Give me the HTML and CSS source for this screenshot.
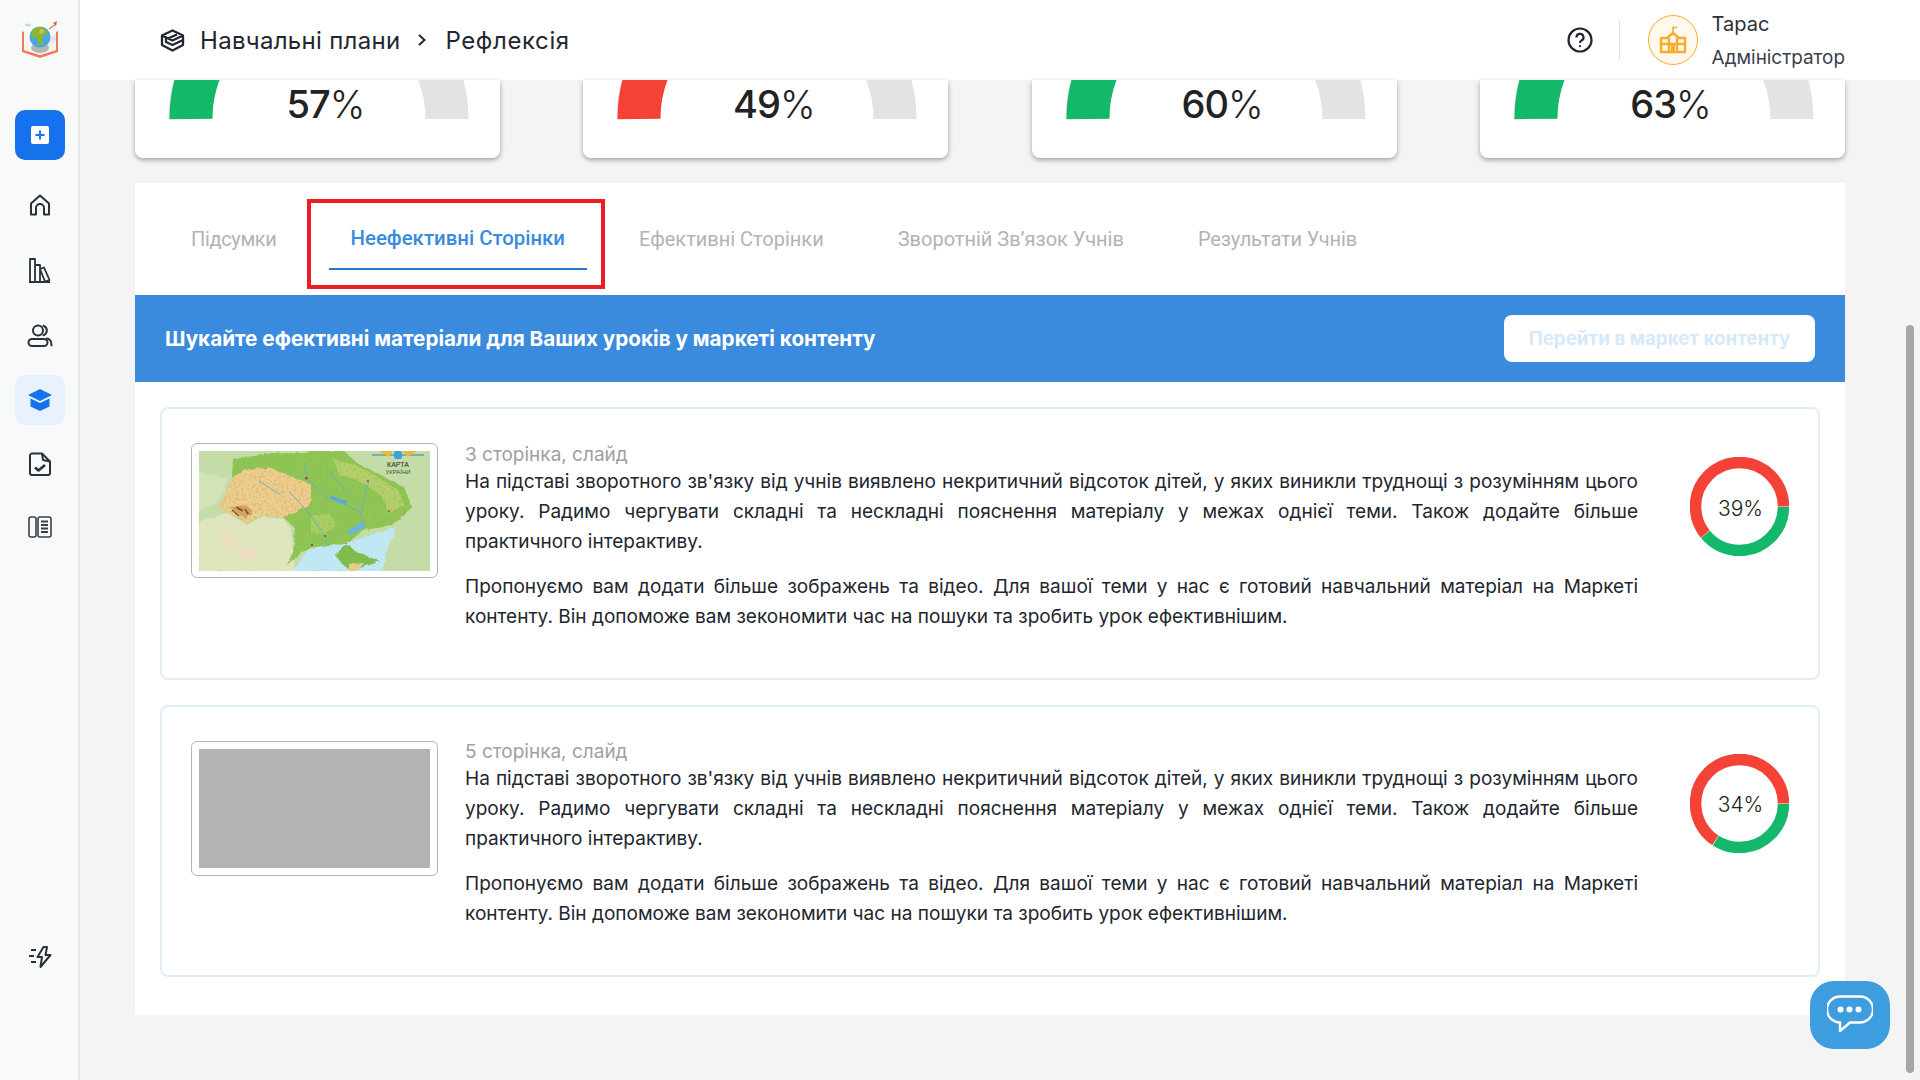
FILE: index.html
```html
<!DOCTYPE html>
<html lang="uk">
<head>
<meta charset="utf-8">
<title>Рефлексія</title>
<link rel="stylesheet" href="styles.css">
</head>
<body>
<aside class="sidebar">
  <div class="logo">
    <svg width="40" height="40" viewBox="0 0 40 40">
      <path d="M2 12V33L20 39L38 33V12L36 13V31L20 36L4 31V13Z" fill="#ee7b55"/>
      <path d="M4 14L20 22L36 14V31L20 36L4 31Z" fill="#f5f5f6"/>
      <path d="M20 22L36 14V22L20 36Z" fill="#ebebed"/>
      <ellipse cx="20" cy="29" rx="9" ry="5" fill="#b5b5b8"/>
      <circle cx="20" cy="18" r="10.5" fill="#4ea6dc"/>
      <path d="M12 11Q19 5 26 10L27 15L22 18L23 25L19 27L17 20L11 17Z" fill="#84b936"/>
      <path d="M20 10L24 11L23 15L19 14Z" fill="#e9b743"/>
      <path d="M29 10L36 5" stroke="#ee7b55" stroke-width="1.4"/>
      <path d="M33 4L37 2L36 7Z" fill="#e0604a"/>
      <ellipse cx="8" cy="6" rx="3" ry="1.6" fill="#bfdcf2"/>
      <ellipse cx="33" cy="20" rx="2.5" ry="1.3" fill="#d4e6f4"/>
    </svg>
  </div>
  <button class="add-btn">
    <svg width="18" height="18" viewBox="0 0 18 18"><rect width="18" height="18" rx="2" fill="#fff"/><path d="M9 4.5v9M4.5 9h9" stroke="#1672ec" stroke-width="2"/></svg>
  </button>
  <nav class="nav-top">
    <span class="nav-item">
      <svg width="24" height="24" viewBox="0 0 24 24" fill="none" stroke="#2b303a" stroke-width="2" stroke-linejoin="round"><path d="M3 21.5V10.5L12 2.5L21 10.5V21.5H16V15A4 4 0 0 0 8 15V21.5Z"/></svg>
    </span>
    <span class="nav-item">
      <svg width="24" height="26" viewBox="0 0 24 26" fill="none" stroke="#2b303a" stroke-width="1.8" stroke-linejoin="round"><path d="M2 24V2H7V24M7 24V8H12V24M12 12L16 10.5L21.5 23L17 24.5ZM1 25H22"/></svg>
    </span>
    <span class="nav-item">
      <svg width="26" height="24" viewBox="0 0 26 24" fill="none" stroke="#2b303a" stroke-width="2" stroke-linecap="round"><circle cx="11" cy="6.5" r="5"/><rect x="1.5" y="15" width="19" height="7" rx="3.5"/><path d="M16.5 1.8A5 5 0 0 1 16.5 11.2M20 14.5C23 15 24.5 18 24.5 21.5"/></svg>
    </span>
    <span class="nav-item nav-active">
      <svg width="26" height="24" viewBox="0 0 26 24"><path d="M13 1L25 7L13 13L1 7Z" fill="#1672ec"/><path d="M3.5 10.5L13 15L22.5 10.5V18.5L13 23L3.5 18.5Z" fill="#1672ec"/></svg>
    </span>
    <span class="nav-item">
      <svg width="22" height="24" viewBox="0 0 22 24" fill="none" stroke="#2b303a" stroke-width="2" stroke-linejoin="round"><path d="M13 1.5H3A2 2 0 0 0 1 3.5V21A2 2 0 0 0 3 23H19A2 2 0 0 0 21 21V9.5Z"/><path d="M13 1.5L14 8L21 9.5" /><path d="M6 15.5L9.5 18.5L16 13" stroke-width="2.6"/></svg>
    </span>
    <span class="nav-item">
      <svg width="24" height="24" viewBox="0 0 24 24" fill="none" stroke="#3b404a" stroke-width="1.6"><rect x="1" y="2" width="7" height="20" rx="2"/><rect x="10" y="2" width="13" height="20" rx="2"/><path d="M13 6.5H20M13 10H20M13 13.5H20M13 17H20" stroke-width="2.2"/></svg>
    </span>
  </nav>
  <span class="nav-item nav-bottom">
    <svg width="24" height="22" viewBox="0 0 24 22" fill="none" stroke="#2b303a" stroke-width="2" stroke-linejoin="round"><path d="M15.5 1L9.5 11H14L12.5 21L22.5 9H17.5L19 1Z"/><path d="M3 4H8M1 10H6M3 16H8"/></svg>
  </span>
</aside>

<div class="page">
  <header class="topbar">
    <div class="crumbs">
      <svg class="crumb-icon" width="25" height="23" viewBox="0 0 25 23" fill="none" stroke="#22262e" stroke-width="2.3" stroke-linejoin="round"><path d="M8 9.5L17 5.5M12.5 1.5L23 6.5L12.5 11.5L2 6.5Z"/><path d="M6 9V13L12.5 16L23 11V7"/><path d="M2 7V16L12.5 21.5L23 16V11"/></svg>
      <span>Навчальні плани</span>
      <svg class="crumb-sep" width="10" height="14" viewBox="0 0 10 14" fill="none" stroke="#22262e" stroke-width="2"><path d="M2 2L7.5 7L2 12"/></svg>
      <span class="crumb-last">Рефлексія</span>
    </div>
    <div class="account">
      <svg class="help" width="26" height="26" viewBox="0 0 26 26" fill="none" stroke="#22262e" stroke-width="2.2"><circle cx="13" cy="13" r="11.5"/><path d="M9.5 10.5A3.5 3.5 0 1 1 14.5 13.5C13.3 14.1 13 14.8 13 16"/><circle cx="13" cy="19.2" r="1.1" fill="#22262e" stroke="none"/></svg>
      <span class="vline"></span>
      <span class="avatar">
        <svg width="28" height="28" viewBox="0 0 28 28" fill="none" stroke="#fbab2c" stroke-width="2.4"><path d="M14 9V1.5H18" stroke-width="1.6"/><path d="M14 7L20 12H26V26H2V12H8Z" stroke-linejoin="round"/><path d="M2 18H26M10 12V26M18 12V26" /><rect x="12" y="19" width="4" height="7" fill="#fbab2c" stroke="none"/></svg>
      </span>
      <div class="who">
        <div class="who-name">Тарас</div>
        <div class="who-role">Адміністратор</div>
      </div>
    </div>
  </header>

  <main class="content">
    <section class="stats">
      <div class="stat">
        <svg class="gauge" width="365" height="78" viewBox="0 0 365 78"><g fill="none" stroke-width="43"><path d="M55 39A128.5 128.5 0 0 1 312 39" stroke="#e3e3e3"/><path d="M56 39A128.5 128.5 0 0 1 93 -52" stroke="#14b86b"/></g></svg>
        <div class="stat-num">57<span class="pct">%</span></div>
      </div>
      <div class="stat">
        <svg class="gauge" width="365" height="78" viewBox="0 0 365 78"><g fill="none" stroke-width="43"><path d="M55 39A128.5 128.5 0 0 1 312 39" stroke="#e3e3e3"/><path d="M56 39A128.5 128.5 0 0 1 93 -52" stroke="#f44336"/></g></svg>
        <div class="stat-num">49<span class="pct">%</span></div>
      </div>
      <div class="stat">
        <svg class="gauge" width="365" height="78" viewBox="0 0 365 78"><g fill="none" stroke-width="43"><path d="M55 39A128.5 128.5 0 0 1 312 39" stroke="#e3e3e3"/><path d="M56 39A128.5 128.5 0 0 1 93 -52" stroke="#14b86b"/></g></svg>
        <div class="stat-num">60<span class="pct">%</span></div>
      </div>
      <div class="stat">
        <svg class="gauge" width="365" height="78" viewBox="0 0 365 78"><g fill="none" stroke-width="43"><path d="M55 39A128.5 128.5 0 0 1 312 39" stroke="#e3e3e3"/><path d="M56 39A128.5 128.5 0 0 1 93 -52" stroke="#14b86b"/></g></svg>
        <div class="stat-num">63<span class="pct">%</span></div>
      </div>
    </section>

    <section class="panel">
      <div class="tabs">
        <span class="tab tab-first">Підсумки</span>
        <span class="tab tab-active">Неефективні Сторінки</span>
        <span class="tab">Ефективні Сторінки</span>
        <span class="tab">Зворотній Зв’язок Учнів</span>
        <span class="tab tab-last">Результати Учнів</span>
      </div>
      <div class="banner">
        <span class="banner-text">Шукайте ефективні матеріали для Ваших уроків у маркеті контенту</span>
        <button class="banner-btn">Перейти в маркет контенту</button>
      </div>
      <div class="items">
        <article class="item">
          <div class="thumb">
            <svg width="231" height="120" viewBox="0 0 231 120">
              <defs>
                <filter id="rough" x="0" y="0" width="100%" height="100%"><feTurbulence type="fractalNoise" baseFrequency="0.16" numOctaves="3" seed="4"/><feDisplacementMap in="SourceGraphic" scale="4"/></filter>
                <filter id="speck" x="0" y="0" width="100%" height="100%"><feTurbulence type="fractalNoise" baseFrequency="0.4" numOctaves="2" seed="9"/><feColorMatrix values="0 0 0 0 0.3  0 0 0 0 0.4  0 0 0 0 0.1  0 0 0 1.2 -0.55"/></filter>
                <clipPath id="land"><path d="M34 9L68 2L110 2L112 0L145 0L158 12L178 22L205 36L213 56L201 69L184 76L164 79L148 93L128 94L112 97L102 102L88 114L96 97L95 76L84 66L64 64L48 72L28 61L18 56L25 49L33 26Z"/></clipPath>
              </defs>
              <rect width="231" height="120" fill="#c4dca8"/>
              <g filter="url(#rough)">
                <path d="M0 20L30 28L20 50L0 60Z" fill="#d3e3b8"/>
                <path d="M0 70L28 62L48 74L64 66L84 68L92 78L96 120H0Z" fill="#dfe6bd"/>
                <path d="M20 85L32 80L40 92L28 100ZM38 98L56 96L60 108L42 110Z" fill="#ecdcc0"/>
                <path d="M95 120L110 97L147 92L198 76L186 105L184 120Z" fill="#bfe7f4"/>
                <path d="M34 9L68 2L110 2L112 0L145 0L158 12L178 22L205 36L213 56L201 69L184 76L164 79L148 93L128 94L112 97L102 102L88 114L96 97L95 76L84 66L64 64L48 72L28 61L18 56L25 49L33 26Z" fill="#8ec653"/>
                <path d="M140 98L150 94L157 101L181 110L168 115L152 120L143 113L136 104Z" fill="#7dbd4c"/>
                <path d="M150 113L165 112L160 119L150 120Z" fill="#e8c98a"/>
                <path d="M28 61L18 56L25 49L33 26L50 18L72 17L94 26L112 33L112 54L96 62L84 66L64 64L48 72Z" fill="#f2cc8d"/>
                <path d="M30 56L46 54L54 60L48 68L38 62Z" fill="#d6a26a"/>
                <path d="M134 8L156 14L176 24L200 40L205 55L190 62L182 44L160 30L140 24Z" fill="#b4d06a"/>
                <path d="M112 66L130 62L138 74L124 84L112 82Z" fill="#a9cf63"/>
                <path d="M38 57L44 60M46 58L50 64M34 60L40 65" stroke="#8a4a2a" stroke-width="1.6"/>
              </g>
              <g clip-path="url(#land)"><rect width="231" height="120" filter="url(#speck)"/></g>
              <g fill="none" stroke="#5fb0c9" stroke-width=".9">
                <path d="M106 12L108 28L128 46L160 60L165 72L150 82"/>
                <path d="M90 40L110 62L125 84M125 84L128 93"/>
                <path d="M60 30L82 44M130 20L150 44M170 30L162 60"/>
              </g>
              <path d="M130 44L148 50L146 54L132 48Z" fill="#5aa9d8"/>
              <path d="M148 80L164 70L166 76L152 84Z" fill="#6cb4dc"/>
              <g fill="#b4452f"><rect x="106" y="26" width="2.4" height="2.4"/><circle cx="126" cy="85" r="1"/><rect x="112" y="93" width="2" height="2"/><circle cx="169" cy="30" r="1"/><circle cx="190" cy="60" r="1"/></g>
              <path d="M173 4H225" stroke="#2a5db0" stroke-width=".8"/>
              <path d="M180 0L194 0L190 6ZM218 0L204 0L208 6Z" fill="#e9b93c"/>
              <rect x="195" y="0" width="8" height="8" rx="2" fill="#3fa0d8"/>
              <text class="map-title" x="199" y="16">КАРТА</text>
              <text class="map-sub" x="199" y="23">УКРАЇНИ</text>
            </svg>
          </div>
          <div class="copy">
            <div class="meta">3 сторінка, слайд</div>
            <p class="para">На підставі зворотного зв'язку від учнів виявлено некритичний відсоток дітей, у яких виникли труднощі з розумінням цього уроку. Радимо чергувати складні та нескладні пояснення матеріалу у межах однієї теми. Також додайте більше практичного інтерактиву.</p>
            <p class="para">Пропонуємо вам додати більше зображень та відео. Для вашої теми у нас є готовий навчальний матеріал на Маркеті контенту. Він допоможе вам зекономити час на пошуки та зробить урок ефективнішим.</p>
          </div>
          <div class="ring">
            <svg width="99" height="99" viewBox="0 0 99 99" fill="none" stroke-width="11.5"><circle cx="49.5" cy="49.5" r="44" stroke="#14b86b" stroke-dasharray="107.3 276.5" stroke-dashoffset="-0.5"/><circle cx="49.5" cy="49.5" r="44" stroke="#f44336" stroke-dasharray="167.7 276.5" stroke-dashoffset="-108.3"/></svg>
            <span class="ring-num">39%</span>
          </div>
        </article>
        <article class="item">
          <div class="thumb"><div class="thumb-empty"></div></div>
          <div class="copy">
            <div class="meta">5 сторінка, слайд</div>
            <p class="para">На підставі зворотного зв'язку від учнів виявлено некритичний відсоток дітей, у яких виникли труднощі з розумінням цього уроку. Радимо чергувати складні та нескладні пояснення матеріалу у межах однієї теми. Також додайте більше практичного інтерактиву.</p>
            <p class="para">Пропонуємо вам додати більше зображень та відео. Для вашої теми у нас є готовий навчальний матеріал на Маркеті контенту. Він допоможе вам зекономити час на пошуки та зробить урок ефективнішим.</p>
          </div>
          <div class="ring ring-second">
            <svg width="99" height="99" viewBox="0 0 99 99" fill="none" stroke-width="11.5"><circle cx="49.5" cy="49.5" r="44" stroke="#14b86b" stroke-dasharray="93.5 276.5" stroke-dashoffset="-0.5"/><circle cx="49.5" cy="49.5" r="44" stroke="#f44336" stroke-dasharray="181.5 276.5" stroke-dashoffset="-94.5"/></svg>
            <span class="ring-num">34%</span>
          </div>
        </article>
      </div>
    </section>
  </main>
  <span class="scroll-thumb"></span>
  <button class="chat">
    <svg width="46" height="40" viewBox="0 0 46 40" fill="none" stroke="#fff" stroke-width="2.4" stroke-linejoin="round"><path d="M13 1.5H33A11.5 11.5 0 0 1 33 27.5H23L13 36V27.5A13 13 0 0 1 13 1.5Z"/><g fill="#fff" stroke="none"><circle cx="13.5" cy="14.5" r="3"/><circle cx="22.5" cy="14.5" r="3"/><circle cx="31.5" cy="14.5" r="3"/></g></svg>
  </button>
</div>
</body>
</html>
```
FILE: styles.css
```css
* { box-sizing: border-box; }
html, body { margin: 0; height: 100%; overflow: hidden; }
body { display: flex; width: 1920px; height: 1080px; font-family: "Inter", "Roboto", "Liberation Sans", sans-serif; color: #22262e; background: #f4f4f4; }
p { margin: 0; }
button { border: 0; padding: 0; font: inherit; }

.sidebar { width: 80px; flex: none; background: #f8fafa; border-right: 2px solid #e4e6e6; display: flex; flex-direction: column; align-items: center; padding-left: 1px; }
.logo { margin-top: 19px; height: 40px; }
.add-btn { margin-top: 51px; width: 50px; height: 50px; border-radius: 10px; background: #1672ec; display: flex; align-items: center; justify-content: center; }
.nav-top { margin-top: 20px; display: flex; flex-direction: column; align-items: center; }
.nav-item { width: 50px; height: 50px; display: flex; align-items: center; justify-content: center; border-radius: 10px; margin-bottom: 15px; }
.nav-top .nav-item:nth-child(2) { margin-bottom: 16px; }
.nav-top .nav-item:nth-child(3) { margin-bottom: 14px; }
.nav-top .nav-item:nth-child(4) { margin-bottom: 14px; }
.nav-top .nav-item:nth-child(5) { margin-bottom: 13px; }
.nav-active { background: #e8f1fe; }
.nav-bottom { margin-top: auto; margin-bottom: 98px; }

.page { flex: 1; min-width: 0; display: flex; flex-direction: column; position: relative; }
.topbar { height: 80px; flex: none; background: #fff; display: flex; align-items: center; justify-content: space-between; padding: 0 75px 0 80px; }
.crumbs { display: flex; align-items: center; font-size: 24px; letter-spacing: .3px; color: #22262e; }
.crumb-icon { margin-right: 15px; }
.crumb-sep { margin: 0 18px 0 17px; }
.crumb-last { letter-spacing: .6px; }
.account { display: flex; align-items: center; }
.help { margin-right: 26px; }
.vline { width: 1px; height: 40px; background: #e0e0e0; margin-right: 28px; }
.avatar { width: 50px; height: 50px; border-radius: 50%; border: 1px solid #fbab2c; background: #fff8ec; display: flex; align-items: center; justify-content: center; margin-right: 14px; }
.who { display: flex; flex-direction: column; height: 62px; justify-content: space-between; margin-top: 2px; }
.who-name { font-size: 20px; line-height: 28px; color: #2b303a; }
.who-role { font-size: 18.9px; line-height: 28px; color: #3b404a; }

.content { flex: 1; padding: 0 75px 0 55px; min-height: 0; }
.stats { display: flex; justify-content: space-between; }
.stat { width: 365px; height: 78px; background: #fff; border-radius: 0 0 8px 8px; box-shadow: 0 2px 5px rgba(0,0,0,.35); position: relative; overflow: hidden; display: flex; justify-content: center; }
.gauge { position: absolute; left: 0; top: 0; }
.stat-num { position: relative; margin: 0 0 0 16px; font-size: 38px; line-height: 48px; font-weight: 500; letter-spacing: -1px; color: #222; }
.pct { font-weight: 300; }

.panel { margin-top: 25px; background: #fff; height: 832px; }
.tabs { height: 112px; display: flex; gap: 30px; padding: 16px 0 0 34px; }
.tab { height: 71px; padding: 8px 22px 0; display: flex; align-items: center; justify-content: center; font-family: "Roboto", sans-serif; font-size: 20px; font-weight: 400; color: #b3b3b3; position: relative; }
.tab-first { letter-spacing: -.35px; }
.tab-last { letter-spacing: -.15px; }
.tab-active { font-size: 20.4px; font-weight: 500; color: #3a8bde; border-bottom: 2px solid #1f7ad6; }
.tab-active::after { content: ""; position: absolute; left: -22px; right: -18px; top: 0; height: 82px; border: 4px solid #ee1c25; }

.banner { height: 87px; background: #3a8bde; padding: 0 30px; display: flex; align-items: center; justify-content: space-between; }
.banner-text { font-size: 20.7px; font-weight: 700; color: #fff; margin-top: -1px; }
.banner-btn { width: 311px; height: 47px; background: #fff; border-radius: 8px; font-size: 18.8px; font-weight: 700; color: #d6e9fa; }

.items { padding: 25px 25px 0; display: flex; flex-direction: column; gap: 25px; }
.item { height: 272.5px; border: 2px solid #e0eef9; border-radius: 8px; display: flex; align-items: flex-start; padding: 34px 29px 0 29px; }
.thumb { width: 247px; height: 135px; flex: none; border: 1px solid #b5b5b5; border-radius: 6px; padding: 7px; display: flex; }
.thumb-empty { flex: 1; background: #b3b3b3; }
.map-title { font: 7px "Liberation Sans", sans-serif; fill: #1e2a22; text-anchor: middle; }
.map-sub { font: 6px "Liberation Sans", sans-serif; fill: #3a5a3a; text-anchor: middle; }
.copy { width: 1173px; flex: none; margin-left: 27px; }
.meta { font-size: 19px; line-height: 24px; color: #a0a0a0; margin-top: -0.5px; }
.para { font-size: 19.05px; line-height: 30px; text-align: justify; color: #22262e; margin-bottom: 15px; }
.ring { width: 99px; height: 99px; flex: none; margin: 14px 0 0 auto; position: relative; display: flex; align-items: center; justify-content: center; }
.ring-second { margin-top: 13px; }
.ring svg { position: absolute; left: 0; top: 0; }
.ring-num { font-size: 21px; font-weight: 300; color: #222; margin-top: 3px; margin-left: 2px; }

.scroll-thumb { position: absolute; left: 1826px; top: 325px; width: 8px; height: 748px; border-radius: 4px; background: #a6a6a6; }
.chat { position: absolute; left: 1730px; top: 981px; width: 80px; height: 68px; border-radius: 24px; background: #3e9ddf; display: flex; align-items: center; justify-content: center; }
```
